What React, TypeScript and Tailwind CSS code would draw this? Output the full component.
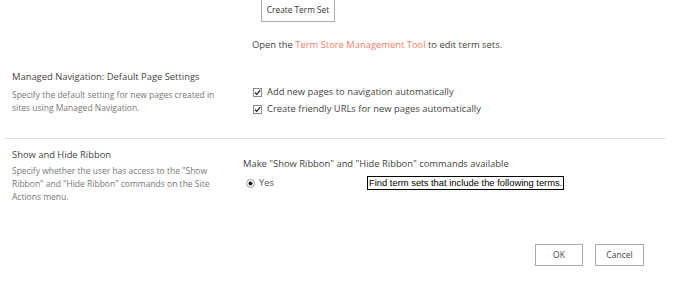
import React from "react";

const Check = () => (
  <svg width="9" height="9" viewBox="0 0 9 9" className="shrink-0">
    <rect x="0.5" y="0.5" width="8" height="8" fill="#fff" stroke="#8a8a8a" />
    <path d="M2 4.5 L3.8 6.4 L7.2 2.2" fill="none" stroke="#1a1a1a" strokeWidth="1.2" />
  </svg>
);

const Radio = () => (
  <svg width="9" height="9" viewBox="0 0 9 9" className="shrink-0">
    <circle cx="4.5" cy="4.5" r="4" fill="#fff" stroke="#9a9a9a" />
    <circle cx="4.5" cy="4.5" r="2" fill="#111" />
  </svg>
);

export default function App() {
  return (
    <div className="w-[682px] h-[287px] bg-white text-[#444] overflow-hidden" style={{ fontFamily: '"Open Sans", sans-serif' }}>
      <div className="flex pl-[261px]">
        <button className="h-[22px] w-[74px] border border-[#ababab] border-t-0 bg-white text-[8.3px] text-[#333]">Create Term Set</button>
      </div>
      <div className="pl-[252px] mt-[16px] text-[9.4px] leading-[14px]">
        Open the <span className="text-[#f47f68]">Term Store Management Tool</span> to edit term sets.
      </div>
      <div className="flex mt-[18px]">
        <div className="w-[242px] pl-[12px] shrink-0">
          <div className="text-[9.4px] leading-[14px] text-[#444]">Managed Navigation: Default Page Settings</div>
          <div className="mt-[5px] text-[8.5px] leading-[12.5px] text-[#777] w-[215px]">
            Specify the default setting for new pages created in sites using Managed Navigation.
          </div>
        </div>
        <div className="pl-[11px] pt-[15px] flex flex-col gap-[3px] text-[9.4px] leading-[14px]">
          <div className="flex items-center gap-[5px]"><Check /><span>Add new pages to navigation automatically</span></div>
          <div className="flex items-center gap-[5px]"><Check /><span>Create friendly URLs for new pages automatically</span></div>
        </div>
      </div>
      <div className="mt-[22px] ml-[4px] w-[662px] border-t border-[#e1e1e1]" />
      <div className="flex mt-[9px]">
        <div className="w-[243px] pl-[12px] shrink-0">
          <div className="text-[9.4px] leading-[14px]">Show and Hide Ribbon</div>
          <div className="mt-[2px] text-[8.5px] leading-[13px] text-[#777] w-[215px]">
            Specify whether the user has access to the "Show Ribbon" and "Hide Ribbon" commands on the Site Actions menu.
          </div>
        </div>
        <div className="pt-[9px] text-[9.4px] leading-[14px]">
          <div>Make "Show Ribbon" and "Hide Ribbon" commands available</div>
          <div className="flex items-center mt-[5px]">
            <div className="flex items-center gap-[4px] pl-[3px] w-[124px] text-[#555]"><Radio /><span>Yes</span></div>
            <div className="h-[14px] border border-black bg-white pl-[1px] pr-[1px] text-[9.4px] leading-[12px] text-black" style={{ fontFamily: '"Liberation Sans", sans-serif' }}>
              Find term sets that include the following terms.
            </div>
          </div>
        </div>
      </div>
      <div className="flex justify-end gap-[12px] pr-[38px] mt-[41px]">
        <button className="h-[22px] w-[48px] border border-[#ababab] bg-white text-[8.5px] text-[#444]">OK</button>
        <button className="h-[22px] w-[49px] border border-[#ababab] bg-white text-[8.5px] text-[#444]">Cancel</button>
      </div>
    </div>
  );
}
